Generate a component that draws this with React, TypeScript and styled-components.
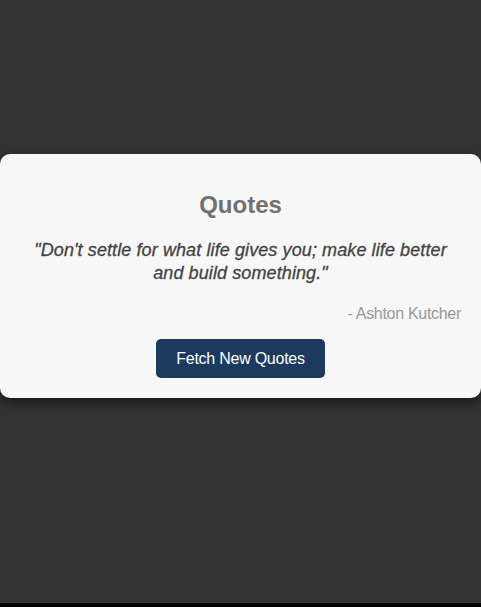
import React from 'react';
import styled, {createGlobalStyle} from 'styled-components';

const GlobalStyle = createGlobalStyle`
  html, body {
    margin: 0;
    padding: 0;
    background: #000;
  }
  body {
    font-family: 'Liberation Sans', Arial, sans-serif;
  }
`;

const Page = styled.div`
  height: calc(100vh - 4px);
  background-color: #333333;
  display: flex;
  flex-direction: column;
  align-items: center;
  padding-top: 154px;
  box-sizing: border-box;
`;

const Card = styled.div`
  width: 100%;
  box-sizing: border-box;
  background-color: #f7f7f7;
  border-radius: 10px;
  padding: 37px 20px 20px;
  text-align: center;
  box-shadow: 0 5px 12px rgba(0, 0, 0, 0.55);
`;

const Title = styled.h2`
  margin: 0 0 20px;
  font-size: 24px;
  font-weight: bold;
  color: #707070;
`;

const QuoteText = styled.p`
  margin: 0 0 20px;
  font-size: 18px;
  line-height: 23px;
  letter-spacing: 0.1px;
  font-style: italic;
  color: #444444;
  -webkit-text-stroke: 0.3px #444444;
`;

const Author = styled.p`
  margin: 0 0 16px;
  font-size: 16px;
  letter-spacing: -0.3px;
  text-align: right;
  color: #999999;
`;

const FetchButton = styled.button`
  font-family: inherit;
  font-size: 16px;
  letter-spacing: -0.25px;
  color: #ffffff;
  background-color: #1b3a5e;
  border: none;
  border-radius: 5px;
  padding: 10.5px 20px;
  cursor: pointer;

  &:hover {
    background-color: #244a76;
  }
`;

const App = () => {
  return (
    <>
      <GlobalStyle />
      <Page>
        <Card>
          <Title>Quotes</Title>
          <QuoteText>
            "Don't settle for what life gives you; make life better and build something."
          </QuoteText>
          <Author>- Ashton Kutcher</Author>
          <FetchButton>Fetch New Quotes</FetchButton>
        </Card>
      </Page>
    </>
  );
};

export default App;
